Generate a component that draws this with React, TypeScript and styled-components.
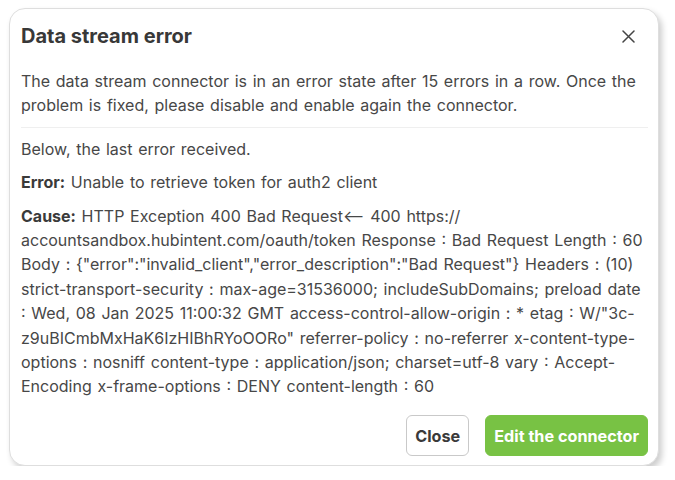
import React from "react";
import styled, { createGlobalStyle } from "styled-components";

const Global = createGlobalStyle`
  html, body { margin: 0; padding: 0; background: #ffffff; }
  body { font-family: Inter, "Noto Sans", sans-serif; }
`;

const Page = styled.div`
  padding: 8px 0 0 9px;
`;

const Card = styled.div`
  box-sizing: border-box;
  width: 650px;
  height: 458px;
  background: #fff;
  border: 1px solid #dedede;
  border-radius: 16px;
  box-shadow: 3px 4px 6px rgba(0, 0, 0, 0.2);
  padding: 13px 10px 9px 11px;
  display: flex;
  flex-direction: column;
  color: #474747;
`;

const Header = styled.div`
  display: flex;
  align-items: center;
  justify-content: space-between;
  height: 28px;
`;

const Title = styled.h2`
  margin: 0;
  font-size: 20px;
  line-height: 28px;
  font-weight: 700;
  color: #383838;
`;

const CloseIcon = styled.button`
  border: none;
  background: none;
  padding: 0;
  margin-right: 12px;
  width: 16px;
  height: 16px;
  display: flex;
  align-items: center;
  justify-content: center;
  color: #444;
  cursor: pointer;
`;

const Text = styled.p`
  margin: 0;
  font-size: 16px;
  line-height: 24.4px;
  word-spacing: 1.2px;
`;

const Intro = styled(Text)`
  margin-top: 19px;
`;

const Divider = styled.hr`
  border: none;
  border-top: 1px solid #efefef;
  margin: 9px 0 9px 0;
`;

const Body = styled.div`
  display: flex;
  flex-direction: column;
  gap: 9px;
`;

const Label = styled.strong`
  font-weight: 700;
  color: #3a3a3a;
`;

const Footer = styled.div`
  margin-top: auto;
  display: flex;
  justify-content: flex-end;
  gap: 16px;
`;

const Button = styled.button<{ $primary?: boolean }>`
  height: 41px;
  padding: 0 8px;
  font-family: Inter, "Noto Sans", sans-serif;
  font-size: 16.2px;
  font-weight: 700;
  border-radius: 6px;
  cursor: pointer;
  border: 1px solid ${(p) => (p.$primary ? "#78c244" : "#c9c9c9")};
  background: ${(p) => (p.$primary ? "#78c244" : "#fff")};
  color: ${(p) => (p.$primary ? "#fff" : "#3a3a3a")};
`;

export default function App() {
  return (
    <>
      <Global />
      <Page>
        <Card>
          <Header>
            <Title>Data stream error</Title>
            <CloseIcon aria-label="Close">
              <svg width="13" height="13" viewBox="0 0 13 13">
                <path d="M1 1L12 12M12 1L1 12" stroke="#444" strokeWidth="1.5" strokeLinecap="round" />
              </svg>
            </CloseIcon>
          </Header>
          <Intro>
            The data stream connector is in an error state after 15 errors in a row. Once the
            problem is fixed, please disable and enable again the connector.
          </Intro>
          <Divider />
          <Body>
            <Text>Below, the last error received.</Text>
            <Text>
              <Label>Error:</Label> Unable to retrieve token for auth2 client
            </Text>
            <Text>
              <Label>Cause:</Label> HTTP Exception 400 Bad Request⟵ 400 https://
              accountsandbox.hubintent.com/oauth/token Response : Bad Request Length : 60 Body :
              {' {"error":"invalid_client","error_description":"Bad Request"}'} Headers : (10)
              strict-transport-security : max-age=31536000; includeSubDomains; preload date : Wed,
              08 Jan 2025 11:00:32 GMT access-control-allow-origin : * etag :
              W/"3c-z9uBICmbMxHaK6IzHIBhRYoOORo" referrer-policy : no-referrer
              x-content-type-options : nosniff content-type : application/json; charset=utf-8 vary
              : Accept-Encoding x-frame-options : DENY content-length : 60
            </Text>
          </Body>
          <Footer>
            <Button>Close</Button>
            <Button $primary>Edit the connector</Button>
          </Footer>
        </Card>
      </Page>
    </>
  );
}
